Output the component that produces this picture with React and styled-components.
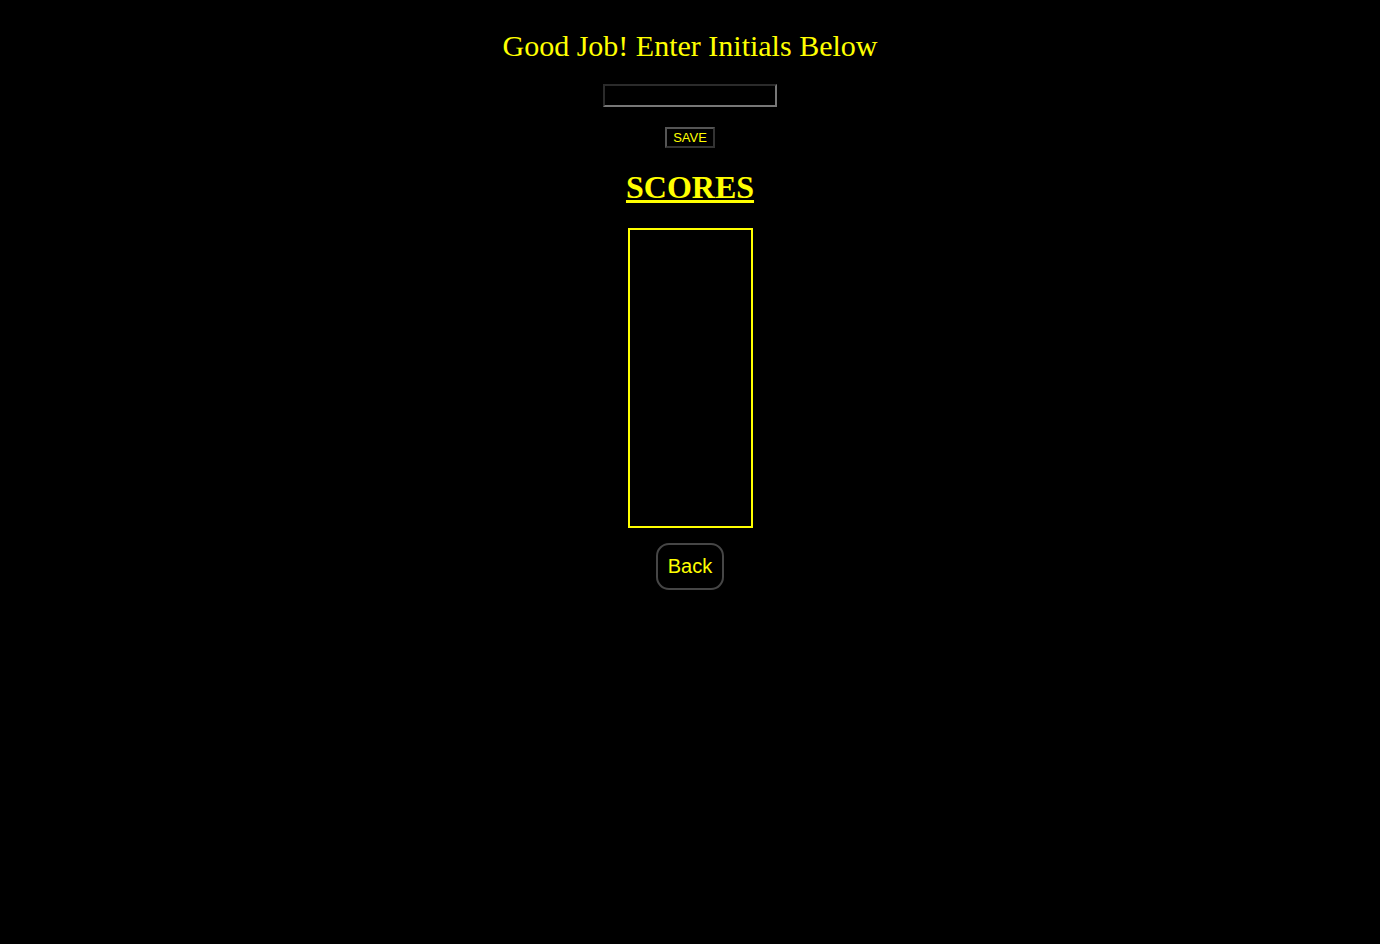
import React from 'react';
import styled, { createGlobalStyle } from 'styled-components';

const GlobalStyle = createGlobalStyle`
  html, body {
    margin: 0;
    padding: 0;
    background: #000000;
    min-height: 100%;
  }
  body {
    font-family: "Liberation Serif", "Times New Roman", serif;
    color: #ffff00;
  }
`;

const Page = styled.div`
  width: 100%;
  min-height: 944px;
  background: #000000;
  display: flex;
  flex-direction: column;
  align-items: center;
  padding-top: 29px;
  box-sizing: border-box;
`;

const Title = styled.h2`
  margin: 0;
  font-family: "Liberation Serif", "Times New Roman", serif;
  font-weight: normal;
  font-size: 30px;
  line-height: 34px;
  color: #ffff00;
`;

const InitialsInput = styled.input`
  margin-top: 21px;
  width: 174px;
  height: 23px;
  box-sizing: border-box;
  background: #000000;
  color: #ffff00;
  border-style: solid;
  border-width: 2px;
  border-color: #2b2b2b #777777 #777777 #2b2b2b;
  padding: 1px 2px;
  font-family: "Liberation Sans", Arial, sans-serif;
  font-size: 13px;
  outline: none;
`;

const SaveButton = styled.button`
  margin-top: 20px;
  width: 50px;
  height: 21px;
  box-sizing: border-box;
  background: #000000;
  color: #ffff00;
  border-style: solid;
  border-width: 2px;
  border-color: #555555 #333333 #333333 #555555;
  padding: 0;
  font-family: "Liberation Sans", Arial, sans-serif;
  font-size: 13px;
  cursor: pointer;
`;

const ScoresHeading = styled.h1`
  margin: 21px 0 0;
  font-family: "Liberation Serif", "Times New Roman", serif;
  font-weight: bold;
  font-size: 32px;
  line-height: 37px;
  text-decoration: underline;
  color: #ffff00;
`;

const ScoreList = styled.ol`
  margin: 22px 0 0;
  padding: 0;
  list-style: none;
  width: 125px;
  height: 300px;
  box-sizing: border-box;
  border: 2px solid #ffff00;
`;

const BackButton = styled.button`
  margin-top: 15px;
  width: 68px;
  height: 47px;
  box-sizing: border-box;
  background: #000000;
  color: #ffff00;
  border: 2px solid #464646;
  border-radius: 13px;
  font-family: "Liberation Sans", Arial, sans-serif;
  font-size: 20px;
  padding: 0;
  cursor: pointer;
`;

const App = () => {
  return (
    <>
      <GlobalStyle />
      <Page>
        <Title>Good Job! Enter Initials Below</Title>
        <InitialsInput type="text" name="initials" />
        <SaveButton>SAVE</SaveButton>
        <ScoresHeading>SCORES</ScoresHeading>
        <ScoreList />
        <BackButton>Back</BackButton>
      </Page>
    </>
  );
};

export default App;
